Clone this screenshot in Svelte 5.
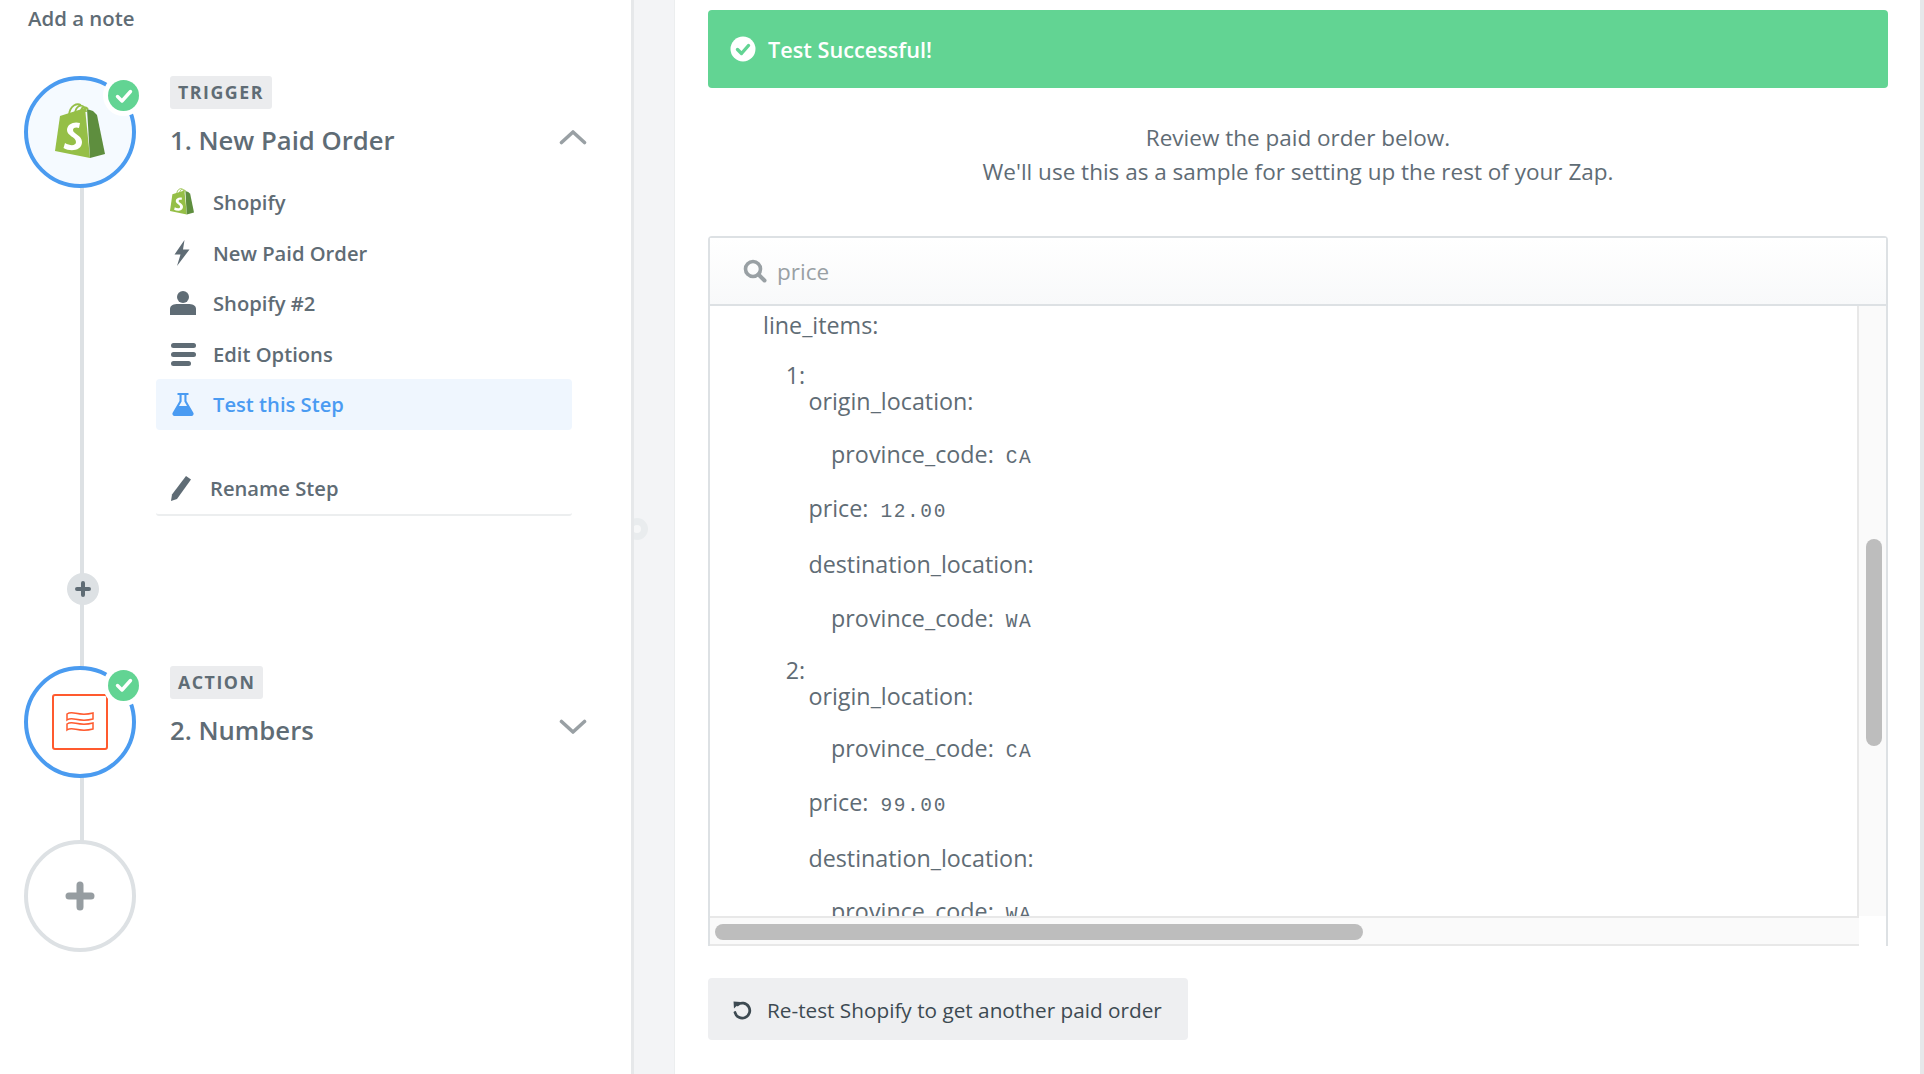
<script>
  const rows = [
    { k: "line_items:", d: 0, gap: 0 },
    { k: "1:", d: 1, gap: 24 },
    { k: "origin_location:", d: 2, gap: 0 },
    { k: "province_code:", v: "CA", d: 3, gap: 27 },
    { k: "price:", v: "12.00", d: 2, gap: 26 },
    { k: "destination_location:", d: 2, gap: 29 },
    { k: "province_code:", v: "WA", d: 3, gap: 28 },
    { k: "2:", d: 1, gap: 24 },
    { k: "origin_location:", d: 2, gap: 0 },
    { k: "province_code:", v: "CA", d: 3, gap: 26 },
    { k: "price:", v: "99.00", d: 2, gap: 27 },
    { k: "destination_location:", d: 2, gap: 28 },
    { k: "province_code:", v: "WA", d: 3, gap: 27 },
  ];
</script>

{#snippet bag(w, h)}
  <svg width={w} height={h} viewBox="0 0 50 58">
    <path d="M5 13 L30 5 L35 55 L0 48 Z" fill="#95bf47" />
    <path d="M32 6 L38 8 L42 12 L50 51 L35 55 Z" fill="#5e8e3e" />
    <path d="M14 12 C15 2 22 0 26 2 M20 10 C21 3 26 1 29 4 C31 6 31 8 31 9 M26 7 C27 4 30 3 33 6" fill="none" stroke="#95bf47" stroke-width="1.8" />
    <path d="M25 20 C19 18 12 21 12 27 C12 33 21 34 21 39 C21 43 15 43 10 40 L8.5 45 C15 49 27 48 27 39 C27 32 18 31 18 27 C18 24 22 24 24 25 Z" fill="#fff" />
  </svg>
{/snippet}

{#snippet badge()}
  <span class="badge">
    <svg width="18" height="16" viewBox="0 0 18 16">
      <path d="M2.5 8.5 L7 13 L15.5 3.5" fill="none" stroke="#fff" stroke-width="3.4" stroke-linecap="round" stroke-linejoin="round" />
    </svg>
  </span>
{/snippet}

<div class="page">
  <aside class="side">
    <div class="note">Add a note</div>

    <div class="timeline">
      <div class="rail"></div>

      <section class="step first">
        <div class="node active">
          {@render bag(50, 58)}
          {@render badge()}
        </div>
        <div class="step-body">
          <span class="tag">TRIGGER</span>
          <div class="title-row">
            <h2>1. New Paid Order</h2>
            <svg class="chev" width="28" height="16" viewBox="0 0 28 16">
              <path d="M2.5 13.5 L14 3 L25.5 13.5" fill="none" stroke="#99a0a4" stroke-width="3.6" stroke-linecap="round" stroke-linejoin="round" />
            </svg>
          </div>
          <ul class="menu">
            <li>
              <span class="ico">{@render bag(24, 28)}</span>Shopify
            </li>
            <li>
              <span class="ico shift">
                <svg width="18" height="28" viewBox="0 0 18 28"><path d="M11.5 1 L1.5 15.5 L7.5 15.5 L4 27 L16.5 10.5 L10 10.5 Z" fill="#5f6c75" /></svg>
              </span>New Paid Order
            </li>
            <li>
              <span class="ico">
                <svg width="26" height="24" viewBox="0 0 26 24"><circle cx="13" cy="6" r="6" fill="#5f6c75" /><path d="M0 24 V18 C0 14 4 13 8 13 H18 C22 13 26 14 26 18 V24 Z" fill="#5f6c75" /></svg>
              </span>Shopify #2
            </li>
            <li>
              <span class="ico">
                <svg width="26" height="24" viewBox="0 0 26 24"><rect x="1" y="1" width="25" height="5" rx="2.5" fill="#5f6c75" /><rect x="1" y="10" width="25" height="5" rx="2.5" fill="#5f6c75" /><rect x="1" y="19" width="20" height="5" rx="2.5" fill="#5f6c75" /></svg>
              </span>Edit Options
            </li>
            <li class="current">
              <span class="ico flask">
                <svg width="22" height="24" viewBox="0 0 22 24"><path d="M5.5 1 H16.5 V3 H14.5 V9 L21.5 21 C22 22.5 21 24 19.5 24 H2.5 C1 24 0 22.5 .5 21 L7.5 9 V3 H5.5 Z M9.6 3 V9.6 L7 14 H15 L12.4 9.6 V3 Z" fill="#4a9bf2" fill-rule="evenodd" /></svg>
              </span>Test this Step
            </li>
          </ul>
          <div class="rename">
            <svg width="22" height="26" viewBox="0 0 22 26"><path d="M16 1 L21 4.5 L7 24 L1 26 L2 19.5 Z" fill="#5f6c75" /></svg>
            Rename Step
          </div>
        </div>
      </section>

      <div class="add-small">
        <svg width="16" height="16" viewBox="0 0 16 16"><path d="M8 2 V14 M2 8 H14" stroke="#5f6c75" stroke-width="4" stroke-linecap="round" /></svg>
      </div>

      <section class="step second">
        <div class="node active white">
          <span class="numbers">
            <svg width="28" height="22" viewBox="0 0 28 22">
              <path d="M1 3 C7 -1 12 6 27 2 V8 C12 12 7 5 1 9 Z M1 13 C7 9 12 16 27 12 V18 C12 22 7 15 1 19 Z" fill="none" stroke="#ff5a2e" stroke-width="1.5" />
            </svg>
          </span>
          {@render badge()}
        </div>
        <div class="step-body">
          <span class="tag">ACTION</span>
          <div class="title-row">
            <h2>2. Numbers</h2>
            <svg class="chev" width="28" height="16" viewBox="0 0 28 16">
              <path d="M2.5 2.5 L14 13 L25.5 2.5" fill="none" stroke="#99a0a4" stroke-width="3.6" stroke-linecap="round" stroke-linejoin="round" />
            </svg>
          </div>
        </div>
      </section>

      <div class="node add-big">
        <svg width="30" height="30" viewBox="0 0 30 30"><path d="M15 4 V26 M4 15 H26" stroke="#969da1" stroke-width="7" stroke-linecap="round" /></svg>
      </div>
    </div>
  </aside>

  <div class="gutter"><span class="ring"></span></div>

  <main class="main">
    <div class="banner">
      <svg width="26" height="26" viewBox="0 0 26 26">
        <circle cx="13" cy="13" r="12.5" fill="#fff" />
        <path d="M7.5 13.5 L11.5 17.5 L18.5 9.5" fill="none" stroke="#62d493" stroke-width="3.4" stroke-linecap="round" stroke-linejoin="round" />
      </svg>
      Test Successful!
    </div>

    <p class="intro">Review the paid order below.<br />We'll use this as a sample for setting up the rest of your Zap.</p>

    <div class="box">
      <div class="search">
        <svg width="24" height="24" viewBox="0 0 24 24">
          <circle cx="10" cy="10" r="7.5" fill="none" stroke="#99a0a4" stroke-width="3.6" />
          <path d="M15.5 15.5 L21.5 21.5" stroke="#99a0a4" stroke-width="4" stroke-linecap="round" />
        </svg>
        <span>price</span>
      </div>
      <div class="view">
        <div class="list">
          {#each rows as r}
            <div class="row" style="margin-left: {r.d * 22.7}px; margin-top: {r.gap}px">
              {r.k}{#if r.v}<code>{r.v}</code>{/if}
            </div>
          {/each}
        </div>
        <div class="vbar"><span></span></div>
      </div>
      <div class="hbar"><span></span></div>
    </div>

    <button class="retest">
      <svg width="20" height="20" viewBox="0 0 20 20">
        <path d="M5.5 4.8 A7.5 7.5 0 1 1 3 12.5" fill="none" stroke="#3d4a52" stroke-width="2.8" stroke-linecap="round" />
        <path d="M1.5 1.5 L8.5 2 L2 8.5 Z" fill="#3d4a52" />
      </svg>
      Re-test Shopify to get another paid order
    </button>
  </main>
</div>

<style>
  :global(body) {
    margin: 0;
    background: #fff;
  }

  .page {
    display: flex;
    height: 1074px;
    overflow: hidden;
    font-family: "Open Sans", sans-serif;
    color: #5f6c75;
    border-right: 4px solid #e6e8ea;
    box-sizing: border-box;
  }

  /* left column */
  .side {
    width: 631px;
    flex: none;
    box-sizing: border-box;
    padding-left: 24px;
  }

  .note {
    margin: 5px 0 0 4px;
    font-size: 20.4px;
    font-weight: 600;
    line-height: 27px;
  }

  .timeline {
    position: relative;
    margin-top: 44px;
  }

  .rail {
    position: absolute;
    left: 56px;
    top: 20px;
    width: 4px;
    height: 800px;
    background: #dde1e4;
  }

  .step {
    position: relative;
    display: flex;
  }

  .node {
    position: relative;
    flex: none;
    width: 112px;
    height: 112px;
    box-sizing: border-box;
    border-radius: 50%;
    display: flex;
    align-items: center;
    justify-content: center;
    background: #fff;
  }

  .node.active {
    border: 4px solid #4a9bf0;
    background: #f5faff;
  }

  .node.active.white {
    background: #fff;
  }

  .badge {
    position: absolute;
    right: -7px;
    top: 0;
    width: 31px;
    height: 31px;
    border-radius: 50%;
    background: #62d493;
    box-shadow: 0 0 0 5px #fff;
    display: flex;
    align-items: center;
    justify-content: center;
  }

  .step-body {
    margin-left: 34px;
    flex: none;
    width: 418px;
  }

  .tag {
    display: inline-block;
    height: 33px;
    padding: 0 8px;
    line-height: 33px;
    border-radius: 3px;
    background: #ebecee;
    font-size: 17.8px;
    font-weight: 700;
    letter-spacing: 1.5px;
    vertical-align: top;
  }

  .title-row {
    display: flex;
    justify-content: space-between;
    align-items: center;
    margin-top: 12px;
    height: 40px;
  }

  h2 {
    margin: 0;
    font-size: 25.7px;
    font-weight: 600;
    line-height: 40px;
  }

  .chev {
    margin-top: -8px;
    margin-right: 1px;
  }

  .menu {
    list-style: none;
    margin: 16px 0 0 -14px;
    padding: 0;
    width: 416px;
  }

  .menu li {
    display: flex;
    align-items: center;
    height: 50.5px;
    padding-left: 14px;
    font-size: 20.2px;
    font-weight: 600;
    border-radius: 4px;
  }

  .ico {
    flex: none;
    width: 43px;
    box-sizing: border-box;
    display: flex;
    align-items: center;
  }

  .ico.shift {
    padding-left: 3px;
  }

  .ico.flask {
    padding-left: 2px;
  }

  .menu li.current {
    background: #eff6fe;
    color: #4a9bf2;
  }

  .rename {
    display: flex;
    align-items: center;
    gap: 18px;
    margin: 33px 0 0 -14px;
    padding-left: 14px;
    width: 402px;
    height: 51px;
    border-bottom: 2px solid #eceeef;
    border-radius: 0 0 3px 3px;
    font-size: 20.2px;
    font-weight: 600;
  }

  .add-small {
    position: relative;
    width: 32px;
    height: 32px;
    margin: 57px 0 0 43px;
    border-radius: 50%;
    background: #dde1e4;
    display: flex;
    align-items: center;
    justify-content: center;
  }

  .step.second {
    margin-top: 61px;
  }

  .numbers {
    width: 56px;
    height: 56px;
    box-sizing: border-box;
    border: 2px solid #ff5a2e;
    border-radius: 3px;
    display: flex;
    align-items: center;
    justify-content: center;
  }

  .add-big {
    margin-top: 62px;
    border: 4px solid #dde1e4;
  }

  /* divider between panels */
  .gutter {
    position: relative;
    flex: none;
    width: 44px;
    box-sizing: border-box;
    overflow: hidden;
    background: #f3f4f6;
    border-left: 3px solid #e6e8ea;
    border-right: 1px solid #eceeef;
  }

  .ring {
    position: absolute;
    left: -8px;
    top: 518px;
    width: 22px;
    height: 22px;
    box-sizing: border-box;
    border: 7px solid #e9ecee;
    border-radius: 50%;
    background: #f6f7f8;
  }

  /* right column */
  .main {
    flex: 1;
    min-width: 0;
    box-sizing: border-box;
    padding: 10px 32px 0 33px;
  }

  .banner {
    height: 78px;
    display: flex;
    align-items: center;
    gap: 12px;
    padding-left: 22px;
    border-radius: 4px;
    background: #62d493;
    color: #fff;
    font-size: 21.7px;
    font-weight: 600;
  }

  .intro {
    margin: 33px 0 0;
    text-align: center;
    font-size: 22.5px;
    line-height: 34px;
  }

  .box {
    margin-top: 47px;
    border: 2px solid #dde1e4;
    border-bottom: 0;
    border-radius: 4px 4px 0 0;
  }

  .search {
    display: flex;
    align-items: center;
    gap: 10px;
    height: 68px;
    padding-left: 33px;
    box-sizing: border-box;
    border-bottom: 2px solid #dde1e4;
    background: linear-gradient(#fff, #f8f9fa);
    font-size: 22.5px;
    color: #99a0a4;
  }

  .view {
    display: flex;
    height: 610px;
  }

  .list {
    flex: 1;
    min-width: 0;
    overflow: hidden;
    padding: 6px 0 0 53px;
  }

  .row {
    font-size: 23.3px;
    line-height: 26px;
  }

  code {
    margin-left: 12px;
    font-family: "Liberation Mono", monospace;
    font-size: 19.5px;
    line-height: 1;
    letter-spacing: 1.6px;
  }

  .vbar {
    flex: none;
    width: 29px;
    box-sizing: border-box;
    background: #fafafa;
    border-left: 2px solid #e8e8e8;
    border-right: 0;
    padding: 0 5px;
  }

  .vbar span {
    display: block;
    width: 16px;
    height: 207px;
    margin: 233px 0 0 2px;
    border-radius: 8px;
    background: #bdbdbd;
  }

  .hbar {
    height: 30px;
    margin-right: 27px;
    box-sizing: border-box;
    background: #fafafa;
    border-top: 2px solid #e8e8e8;
    border-bottom: 2px solid #e8e8e8;
    padding: 6px 5px;
  }

  .hbar span {
    display: block;
    width: 648px;
    height: 16px;
    border-radius: 8px;
    background: #bdbdbd;
  }

  .retest {
    display: flex;
    align-items: center;
    gap: 15px;
    margin-top: 32px;
    width: 480px;
    height: 62px;
    padding: 1px 0 0 24px;
    border: 0;
    border-radius: 4px;
    background: #eeeff1;
    color: #3d4a52;
    font-family: inherit;
    font-size: 20.75px;
  }
</style>
